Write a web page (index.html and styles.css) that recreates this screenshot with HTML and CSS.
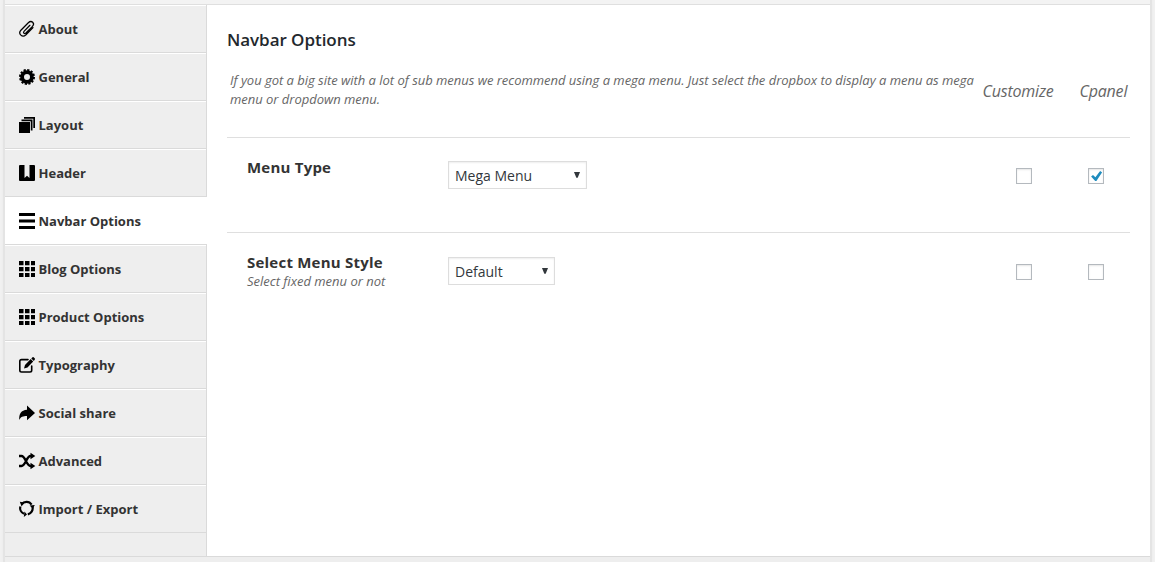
FILE: index.html
```html
<!DOCTYPE html>
<html lang="en">
<head>
<meta charset="utf-8">
<title>Navbar Options</title>
<link rel="stylesheet" href="styles.css">
</head>
<body>
<div class="frame">
  <header class="topbar"></header>
  <div class="panel">
    <nav class="sidebar">
      <a class="tab"><svg class="icon" viewBox="0 0 16 16"><path class="line clip" d="M10.900 4.300 5 10.400C3.800 11.900 5.400 13.300 6.900 12L13.500 5.400C16.300 2.300 12.600-1.200 9.300 1.700L1.900 9.200C-1.300 12.900 3.300 17.200 7 13.700L14 6.600"/></svg><span>About</span></a>
      <a class="tab"><svg class="icon" viewBox="0 0 16 16"><circle class="ring" cx="8" cy="8" r="4.900"/><circle class="teeth" cx="8" cy="8" r="7"/></svg><span>General</span></a>
      <a class="tab"><svg class="icon" viewBox="0 0 16 16"><path d="M0 5h11v11H0zM2.500 2.500H13.500V13.500H11.800V4.200H2.500zM5 0H16V11H14.300V1.700H5z"/></svg><span>Layout</span></a>
      <a class="tab"><svg class="icon" viewBox="0 0 16 16"><path d="M1 0H5.500V13L8 10.700 10.500 13V0H15a1 1 0 0 1 1 1V15a1 1 0 0 1-1 1H1a1 1 0 0 1-1-1V1a1 1 0 0 1 1-1z"/></svg><span>Header</span></a>
      <a class="tab active"><svg class="icon" viewBox="0 0 16 16"><path d="M0 0h16v3H0zM0 6.500h16v3H0zM0 13h16v3H0z"/></svg><span>Navbar Options</span></a>
      <a class="tab"><svg class="icon" viewBox="0 0 16 16"><path d="M0 0h4.500v4.300H0zM6 0h4.500v4.300H6zM12 0h4v4.300h-4zM0 6h4.500v4.300H0zM6 6h4.500v4.300H6zM12 6h4v4.300h-4zM0 12h4.500v4H0zM6 12h4.500v4H6zM12 12h4v4h-4z"/></svg><span>Blog Options</span></a>
      <a class="tab"><svg class="icon" viewBox="0 0 16 16"><path d="M0 0h4.500v4.300H0zM6 0h4.500v4.300H6zM12 0h4v4.300h-4zM0 6h4.500v4.300H0zM6 6h4.500v4.300H6zM12 6h4v4.300h-4zM0 12h4.500v4H0zM6 12h4.500v4H6zM12 12h4v4h-4z"/></svg><span>Product Options</span></a>
      <a class="tab"><svg class="icon" viewBox="0 0 16 16"><path class="line" d="M9 2.600H2.500Q.8 2.600.8 4.300V13.300Q.8 15 2.500 15H11Q12.700 15 12.700 13.300V9"/><path d="M5 11.600 6 8 11.700 2.100 14.200 4.600 8.500 10.600zM12.300 1.500 13.500.3Q14.200-.3 14.900.4L15.700 1.200Q16.300 2 15.700 2.700L14.800 3.900z"/></svg><span>Typography</span></a>
      <a class="tab"><svg class="icon" viewBox="0 0 16 16"><path d="M8 .5 16 8 8 15.300V11C4 11 1.600 11.800.3 15-.3 9.300 2.200 4.900 8 4.700z"/></svg><span>Social share</span></a>
      <a class="tab"><svg class="icon" viewBox="0 0 16 16"><path class="strand" d="M0 3H2.500C6.500 3 7.500 13 11.500 13H13M0 13H2.500C6.500 13 7.500 3 11.500 3H13"/><path d="M11.500-.3 16.300 3 11.500 6.300zM11.500 9.700 16.300 13 11.500 16.300z"/></svg><span>Advanced</span></a>
      <a class="tab"><svg class="icon" viewBox="0 0 16 16"><path class="cycle" d="M2.600 3.400A6.100 6.100 0 0 1 12.600 3.700M13.500 6A6.100 6.100 0 0 1 8.800 13.300M5 12.800A6.100 6.100 0 0 1 1.400 5.500"/><path d="M.8.700 5.400 1.600 2.600 5.500zM10.600 4.500 15.800 4 13.800 7.800zM5.500 10.600 8 13.600 4.800 15.900z"/></svg><span>Import / Export</span></a>
    </nav>
    <main class="content">
      <h1 class="title">Navbar Options</h1>
      <div class="intro">
        <p class="intro-text">If you got a big site with a lot of sub menus we recommend using a mega menu. Just select the dropbox to display a menu as mega menu or dropdown menu.</p>
        <span class="column-name">Customize</span>
        <span class="column-name">Cpanel</span>
      </div>
      <section class="option">
        <div class="label"><h2 class="name">Menu Type</h2></div>
        <div class="field"><div class="select wide"><span>Mega Menu</span><svg class="arrow" viewBox="0 0 6 6"><path d="M0 0h6L3.700 5.800H2.300z"/></svg></div></div>
        <span class="check"></span>
        <span class="check"><svg class="tick" viewBox="0 0 12 12"><path d="M1.100 6.500 3 5 5.400 7.300 10.100 1 12.200 2.300 6.400 10.900H5.200z"/></svg></span>
      </section>
      <section class="option second">
        <div class="label"><h2 class="name">Select Menu Style</h2><p class="hint">Select fixed menu or not</p></div>
        <div class="field"><div class="select"><span>Default</span><svg class="arrow" viewBox="0 0 6 6"><path d="M0 0h6L3.700 5.800H2.300z"/></svg></div></div>
        <span class="check"></span>
        <span class="check"></span>
      </section>
    </main>
  </div>
  <footer class="bottom"></footer>
</div>
</body>
</html>
```

FILE: styles.css
```css
* { box-sizing: border-box; }
body {
  margin: 0;
  height: 562px;
  padding: 0 5px;
  overflow: hidden;
  background: #f1f1f1;
  color: #333;
  font-family: "Open Sans", sans-serif;
}
.frame {
  height: 562px;
  display: flex;
  flex-direction: column;
  box-shadow: 0 0 0 2px #e4e4e4, 0 0 4px #ddd;
}
.topbar { height: 5px; background: #f3f3f3; border-bottom: 1px solid #dfdfdf; }
.panel { height: 551px; display: flex; background: #fff; }
.bottom { height: 6px; background: #eee; border-top: 1px solid #dadada; }

.sidebar {
  width: 202px;
  background: #eee;
  border-right: 1px solid #dadada;
}
.tab {
  display: flex;
  align-items: center;
  gap: 3.5px;
  height: 48px;
  padding-left: 14px;
  border-top: 1px solid #fff;
  border-bottom: 1px solid #dadada;
  font-size: 13px;
  font-weight: 700;
  white-space: nowrap;
}
.active { width: 202px; background: #fff; }
.icon { width: 16px; height: 16px; flex: none; overflow: visible; fill: #000; }
.line { fill: none; stroke: #000; stroke-width: 1.6; stroke-linecap: round; }
.clip { stroke-width: 1.25; }
.ring { fill: none; stroke: #000; stroke-width: 3.8; }
.teeth { fill: none; stroke: #000; stroke-width: 2; stroke-dasharray: 2.2 1.465; }
.strand { fill: none; stroke: #000; stroke-width: 2.4; }
.cycle { fill: none; stroke: #000; stroke-width: 2.2; }

.content { width: 943px; padding: 22px 20px 0; }
.title { margin: 0; font-size: 17px; line-height: 26px; font-weight: 600; letter-spacing: -.05px; color: #23282d; }
.intro {
  display: grid;
  grid-template-columns: 755.5px 97px 50.5px;
  height: 85px;
  border-bottom: 1px solid #dfdfdf;
  color: #666;
  font-style: italic;
}
.intro-text { margin: 18px 0 0 3px; font-size: 13px; line-height: 19px; letter-spacing: -.024px; }
.column-name { padding-top: 26px; font-size: 16px; line-height: 24px; letter-spacing: -.2px; }
.option {
  display: grid;
  grid-template-columns: 221px 568px 72px 42px;
  height: 95px;
  border-bottom: 1px solid #dfdfdf;
}
.second { border-bottom: 0; }
.label { padding: 18px 0 0 20px; }
.name { margin: 0; font-size: 15px; line-height: 22px; font-weight: 700; letter-spacing: .22px; }
.hint { margin: -1px 0 0; font-size: 13px; line-height: 18px; font-style: italic; color: #666; }
.field { padding-top: 23px; }
.second .field { padding-top: 24px; }
.select {
  display: flex;
  align-items: center;
  justify-content: space-between;
  width: 107px;
  height: 28px;
  padding: 1px 6px 0;
  border: 1px solid #ddd;
  box-shadow: inset 0 1px 2px rgba(0, 0, 0, .07);
  font-size: 14px;
  color: #32373c;
}
.wide { width: 139px; }
.arrow { width: 6px; height: 6px; margin-top: -2px; fill: #32373c; }
.check {
  display: grid;
  place-items: center;
  width: 16px;
  height: 16px;
  margin-top: 30px;
  border: 1px solid #b4b9be;
  box-shadow: inset 0 1px 2px rgba(0, 0, 0, .1);
}
.second .check { margin-top: 31px; }
.tick { width: 12px; height: 12px; fill: #1e8cbe; }
```
